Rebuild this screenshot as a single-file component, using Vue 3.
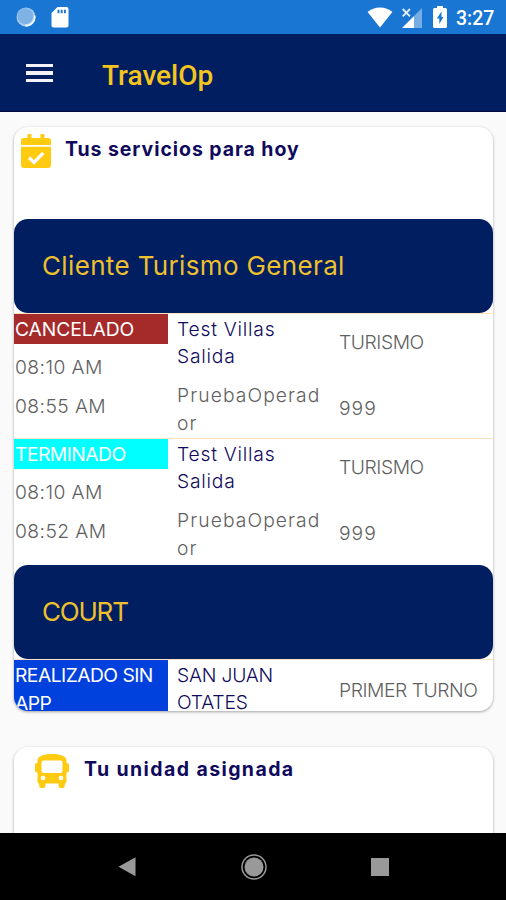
<template>
  <div class="phone">
    <div class="statusbar">
      <svg class="spinner" width="20" height="20" viewBox="0 0 20 20">
        <circle cx="10" cy="10" r="9.5" fill="#a9cdf0" />
        <circle cx="9.3" cy="9.2" r="8" fill="#7fb2e5" />
        <path d="M18.6 8.500a9 9 0 0 1-9.500 10.200" fill="none" stroke="#f2f8fe" stroke-width="1.800" />
      </svg>
      <svg class="sdcard" width="18" height="21" viewBox="0 0 18 21">
        <path d="M6.500 0H15.500Q17.500 0 17.500 2V18.500Q17.500 20.500 15.500 20.500H2.500Q.5 20.500 .5 18.500V6Z" fill="#fff" />
        <path d="M7.500 2.800v3.400M10.700 2.800v3.400M13.900 2.800v3.400" stroke="#1976d2" stroke-width="1.900" />
      </svg>
      <div class="spacer"></div>
      <svg class="wifi" width="26" height="21" viewBox="0 0 26 21">
        <path d="M13 20.500L.6 4.900C4 2 8.200.4 13 .4S22 2 25.400 4.900Z" fill="#fff" />
      </svg>
      <svg class="signal" width="20" height="20" viewBox="0 0 20 20">
        <path d="M20 0V20H12V8Z" fill="#75ade4" />
        <path d="M12 8V20H0Z" fill="#fff" />
        <path d="M.7 1l7.300 7.300M8 1L.7 8.300" stroke="#1976d2" stroke-width="4" />
        <path d="M.7 1l7.300 7.300M8 1L.7 8.300" stroke="#e3effb" stroke-width="1.800" />
      </svg>
      <svg class="battery" width="14" height="22" viewBox="0 0 14 22">
        <path d="M4 0h6v2h2.500q1.500 0 1.500 1.500v17q0 1.500-1.500 1.500h-11Q0 22 0 20.500v-17Q0 2 1.500 2H4Z" fill="#fff" />
        <path d="M8.500 5.500L3.800 12.500H6.300V18L10.500 11H8.500Z" fill="#1976d2" />
      </svg>
      <span class="clock">3:27</span>
    </div>

    <header class="toolbar">
      <div class="burger"><i></i><i></i><i></i></div>
      <h1>TravelOp</h1>
    </header>

    <main class="content">
      <section class="card services">
        <div class="card-title">
          <svg width="30" height="35" viewBox="0 0 30 35">
            <path d="M0 11V7Q0 4 3 4H6.500V1Q6.500 0 7.500 0H9.500Q10.500 0 10.500 1V4H19.500V1Q19.500 0 20.500 0H22.500Q23.500 0 23.500 1V4H27Q30 4 30 7V11Z" fill="#ffcb10" />
            <path d="M0 12.800H30V31Q30 34 27 34H3Q0 34 0 31Z" fill="#ffcb10" />
            <path d="M8 23.500L13 28.400L22.300 19" fill="none" stroke="#fff" stroke-width="3.200" />
          </svg>
          <h2>Tus servicios para hoy</h2>
        </div>
        <template v-for="group in groups" :key="group.name">
          <h3 class="group" :class="group.style">{{ group.name }}</h3>
          <div v-for="(item, i) in group.items" :key="i" class="row">
            <div class="col times">
              <span class="badge" :class="item.style">{{ item.status }}</span>
              <span v-for="time in item.times" :key="time" class="time">{{ time }}</span>
            </div>
            <div class="col route">
              <span class="place" :class="{ upper: item.upper }">{{ item.place }}</span>
              <span v-if="item.operator" class="operator">{{ item.operator }}</span>
            </div>
            <div class="col kind" :class="{ single: !item.unit }">
              <span>{{ item.kind }}</span>
              <span v-if="item.unit" class="unit">{{ item.unit }}</span>
            </div>
          </div>
        </template>
      </section>

      <section class="card vehicle">
        <div class="card-title">
          <svg width="34" height="34" viewBox="0 0 34 34">
            <path d="M17 0C26 0 31 2.500 31.500 6V9H32Q34 9 34 11V16.500Q34 18.500 32 18.500H31.500V27.500Q31.500 29.500 29.800 29.500V32Q29.800 34 27.800 34H25.500Q23.500 34 23.500 32V29.500H10.500V32Q10.500 34 8.500 34H6.200Q4.200 34 4.200 32V29.500Q2.500 29.500 2.500 27.500V18.500H2Q0 18.500 0 16.500V11Q0 9 2 9H2.500V6C3 2.500 8 0 17 0Z" fill="#ffcb10" />
            <rect x="6.500" y="6.500" width="21" height="12.500" rx="2" fill="#fff" />
            <circle cx="8" cy="24" r="2.300" fill="#fff" />
            <circle cx="26" cy="24" r="2.300" fill="#fff" />
          </svg>
          <h2>Tu unidad asignada</h2>
        </div>
      </section>
    </main>

    <nav class="navbar">
      <svg width="18" height="20" viewBox="0 0 18 20"><path d="M17.500 .3V19.300L.5 9.800Z" fill="#999" /></svg>
      <svg width="26" height="26" viewBox="0 0 26 26">
        <circle cx="13" cy="13" r="12" fill="none" stroke="#999" stroke-width="1.500" />
        <circle cx="13" cy="13" r="9.500" fill="#999" />
      </svg>
      <svg width="18" height="18" viewBox="0 0 18 18"><path d="M0 0h18v18H0z" fill="#999" /></svg>
    </nav>
  </div>
</template>

<script setup>
import { ref } from 'vue';

const groups = ref([
  {
    name: 'Cliente Turismo General',
    style: 'client',
    items: [
      {
        status: 'CANCELADO',
        style: 'cancelled',
        times: ['08:10 AM', '08:55 AM'],
        place: 'Test Villas\nSalida',
        operator: 'PruebaOperad\nor',
        kind: 'TURISMO',
        unit: '999',
      },
      {
        status: 'TERMINADO',
        style: 'finished',
        times: ['08:10 AM', '08:52 AM'],
        place: 'Test Villas\nSalida',
        operator: 'PruebaOperad\nor',
        kind: 'TURISMO',
        unit: '999',
      },
    ],
  },
  {
    name: 'COURT',
    style: 'court',
    items: [
      {
        status: 'REALIZADO SIN\nAPP',
        style: 'no-app',
        times: [],
        place: 'SAN JUAN\nOTATES',
        upper: true,
        operator: '',
        kind: 'PRIMER TURNO',
        unit: '',
      },
    ],
  },
]);
</script>

<style>
body {
  background: #fafafa;
}
</style>

<style scoped>
.phone {
  width: 506px;
  height: 900px;
  overflow: hidden;
  display: flex;
  flex-direction: column;
  background: #fafafa;
  font-family: Inter, "Noto Sans", sans-serif;
}

.statusbar {
  height: 34px;
  flex: none;
  display: flex;
  align-items: center;
  background: #1976d2;
  padding: 0 11px 0 16px;
}

.sdcard {
  margin-left: 15px;
}

.spacer {
  flex: 1;
}

.signal {
  margin: 2px 11px 0 9px;
}

.clock {
  width: 39px;
  margin: 2px 0 0 9px;
  font: 500 19.500px Roboto, sans-serif;
  color: #fff;
  white-space: nowrap;
}

.toolbar {
  height: 78px;
  flex: none;
  display: flex;
  align-items: center;
  box-sizing: border-box;
  background: #001e60;
  border-bottom: 1px solid #000b40;
  padding-left: 26px;
}

.burger {
  width: 27px;
  display: flex;
  flex-direction: column;
  gap: 4px;
  margin-top: 1px;
}

.burger i {
  height: 3.500px;
  background: #f4f3fa;
}

.toolbar h1 {
  margin: 5px 0 0 49px;
  font: 500 28px Roboto, sans-serif;
  color: #f4c51f;
}

.content {
  flex: 1;
  overflow: hidden;
  padding: 15px 13px 0 14px;
}

.card {
  background: #fff;
  border-radius: 14px;
  box-shadow: 0 1px 3px rgba(0, 0, 0, 0.35);
  overflow: hidden;
}

.services {
  height: 584px;
}

.vehicle {
  height: 140px;
  margin-top: 36px;
}

.card-title {
  display: flex;
  align-items: flex-start;
  height: 85px;
  padding: 7px 0 0 7px;
}

.card-title h2 {
  margin: 1px 0 0 14px;
  font-size: 19.500px;
  line-height: 28px;
  font-weight: 700;
  letter-spacing: 0.930px;
  color: #100a5c;
}

.vehicle .card-title {
  padding-left: 21px;
}

.vehicle h2 {
  margin-left: 15px;
  letter-spacing: 1.400px;
}

.group {
  height: 94px;
  margin: 0;
  padding-left: 28px;
  border-radius: 14px;
  background: #001e60;
  color: #eec02e;
  font-size: 26px;
  line-height: 94px;
  font-weight: 400;
}

.client {
  letter-spacing: 0.350px;
}

.court {
  letter-spacing: -1.200px;
}

.row {
  height: 125px;
  display: grid;
  grid-template-columns: 154px 162px 1fr;
  border-top: 1px solid #fde3c3;
  box-sizing: border-box;
  font-size: 19.300px;
  line-height: 27.700px;
  font-weight: 300;
  color: #5f5f5f;
  white-space: pre;
}

.row + .row {
  height: 127px;
}

.col {
  display: flex;
  flex-direction: column;
  align-items: flex-start;
}

.badge {
  width: 100%;
  padding: 2px 0 0 1px;
  box-sizing: border-box;
  color: #fff;
  font-weight: 400;
  letter-spacing: -0.550px;
}

.cancelled {
  background: #a52a2a;
  letter-spacing: -0.100px;
}

.finished {
  background: #00ffff;
}

.no-app {
  background: #0040dd;
}

.time {
  margin: 10px 0 1.500px 1px;
  letter-spacing: 0.420px;
}

.route {
  padding: 1.500px 0 0 9px;
  gap: 11.500px;
}

.place {
  color: #100a5c;
  letter-spacing: 0.750px;
}

.place.upper {
  letter-spacing: -0.200px;
}

.operator {
  letter-spacing: 1.080px;
}

.kind {
  padding: 14.500px 0 0 9px;
  gap: 38.500px;
  letter-spacing: -0.450px;
}

.kind.single {
  padding-top: 17px;
}

.unit {
  letter-spacing: 1px;
}

.navbar {
  height: 67px;
  flex: none;
  display: flex;
  align-items: center;
  justify-content: space-between;
  box-sizing: border-box;
  padding: 0 117px 0 118px;
  background: #000;
}
</style>
